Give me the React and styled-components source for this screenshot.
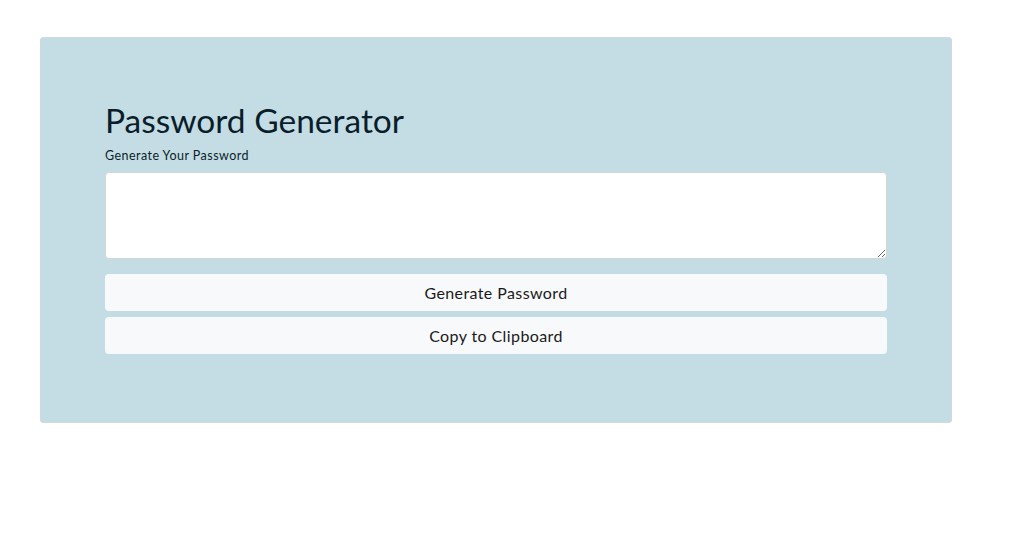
import React from "react";
import styled, { createGlobalStyle } from "styled-components";

const GlobalStyle = createGlobalStyle`
  body {
    margin: 0;
    background: #ffffff;
    font-family: "Lato", "Open Sans", sans-serif;
    color: #0d1e2c;
  }
`;

const Page = styled.div`
  padding: 37px 0 0 40px;
`;

const Card = styled.div`
  width: 912px;
  box-sizing: border-box;
  background-color: #c4dde4;
  border: 1px solid #d2d9dc;
  border-radius: 3px;
  padding: 60px 64px 68px;
`;

const Title = styled.h1`
  margin: 0;
  font-weight: 400;
  font-size: 33.5px;
  line-height: 44px;
  letter-spacing: 0;
  color: #0b1d2b;
`;

const Label = styled.label`
  display: block;
  font-size: 12.5px;
  line-height: 16px;
  letter-spacing: 0.45px;
  margin: 6px 0 8px;
  color: #0b1d2b;
`;

const Area = styled.textarea`
  display: block;
  width: 100%;
  height: 87px;
  box-sizing: border-box;
  border: 1px solid #d3d6d8;
  border-radius: 4px;
  background: #fff;
  resize: vertical;
  font-family: inherit;
  margin-bottom: 15px;
`;

const Button = styled.button`
  display: block;
  width: 100%;
  height: 37px;
  box-sizing: border-box;
  border: none;
  border-radius: 4px;
  background: #f8f9fa;
  font-family: inherit;
  font-size: 16px;
  letter-spacing: 0.4px;
  color: #1a1a1a;
  margin-top: ${(props) => (props.first ? "0" : "6px")};
  cursor: pointer;
`;

const App = () => (
  <Page>
    <GlobalStyle />
    <Card>
      <Title>Password Generator</Title>
      <Label htmlFor="pw">Generate Your Password</Label>
      <Area id="pw" />
      <Button first>Generate Password</Button>
      <Button>Copy to Clipboard</Button>
    </Card>
  </Page>
);

export default App;
